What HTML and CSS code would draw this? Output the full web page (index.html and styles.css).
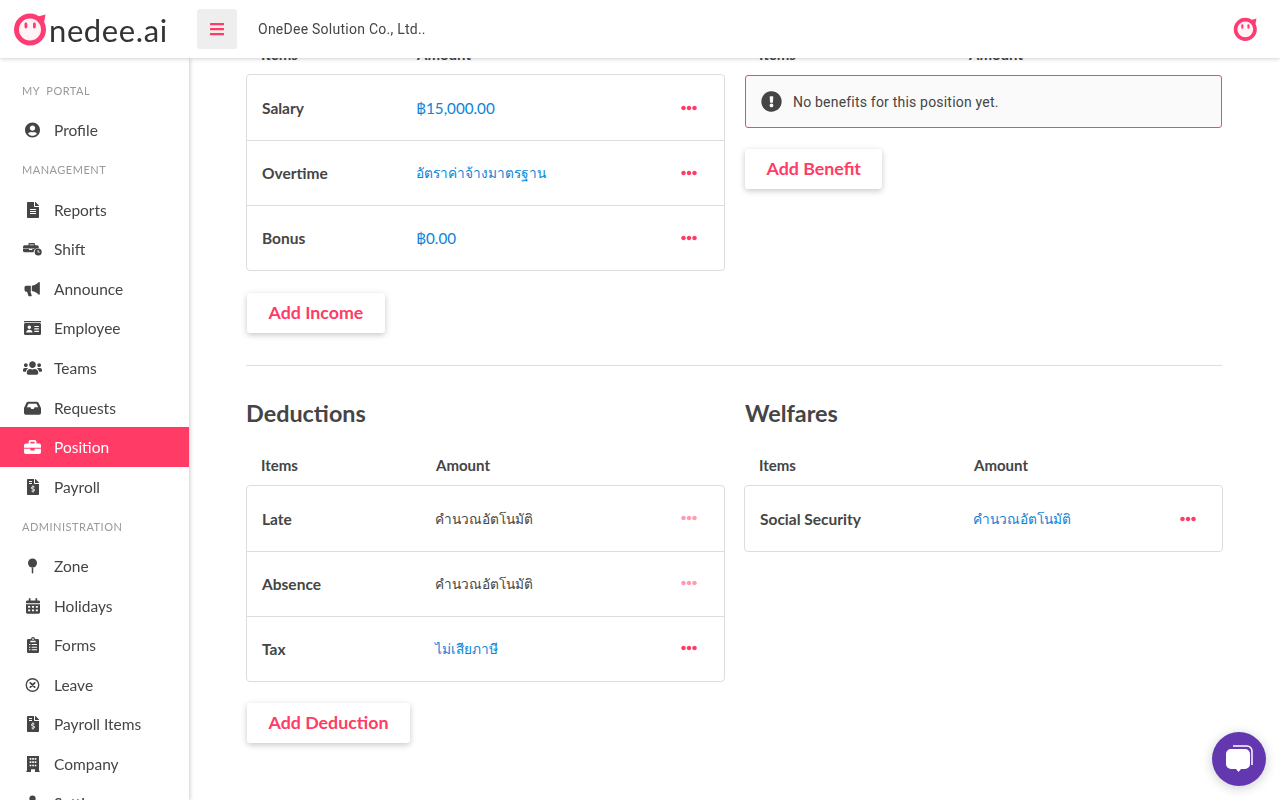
FILE: index.html
```html
<!DOCTYPE html>
<html>
<head>
  <title>Position ~ OneDee</title>
  <link rel="stylesheet" href="styles.css">
</head>
<body>
<svg class="sprite">
  <symbol id="i-user" viewBox="0 0 496 512"><path d="M248 8C111 8 0 119 0 256s111 248 248 248 248-111 248-248S385 8 248 8zm0 96c48.6 0 88 39.4 88 88s-39.4 88-88 88-88-39.4-88-88 39.4-88 88-88zm0 344c-58.7 0-111.3-26.6-146.5-68.2 18.8-35.4 55.6-59.8 98.5-59.8 2.4 0 4.8.4 7.1 1.1 13 4.2 26.6 6.9 40.9 6.9 14.3 0 28-2.7 40.9-6.9 2.3-.7 4.7-1.1 7.1-1.1 42.9 0 79.7 24.4 98.5 59.8C359.3 421.4 306.7 448 248 448z"/></symbol>
  <symbol id="i-bars" viewBox="0 0 448 512"><path d="M16 132h416c8.837 0 16-7.163 16-16V76c0-8.837-7.163-16-16-16H16C7.163 60 0 67.163 0 76v40c0 8.837 7.163 16 16 16zm0 160h416c8.837 0 16-7.163 16-16v-40c0-8.837-7.163-16-16-16H16c-8.837 0-16 7.163-16 16v40c0 8.837 7.163 16 16 16zm0 160h416c8.837 0 16-7.163 16-16v-40c0-8.837-7.163-16-16-16H16c-8.837 0-16 7.163-16 16v40c0 8.837 7.163 16 16 16z"/></symbol>
  <symbol id="i-file" viewBox="0 0 384 512"><path d="M224 136V0H24C10.7 0 0 10.7 0 24v464c0 13.3 10.7 24 24 24h336c13.3 0 24-10.7 24-24V160H248c-13.2 0-24-10.8-24-24zm64 236c0 6.6-5.4 12-12 12H108c-6.6 0-12-5.4-12-12v-8c0-6.6 5.4-12 12-12h168c6.6 0 12 5.4 12 12v8zm0-64c0 6.6-5.4 12-12 12H108c-6.6 0-12-5.4-12-12v-8c0-6.6 5.4-12 12-12h168c6.6 0 12 5.4 12 12v8zm0-72v8c0 6.6-5.4 12-12 12H108c-6.6 0-12-5.4-12-12v-8c0-6.6 5.4-12 12-12h168c6.6 0 12 5.4 12 12zm96-114.1v6.1H256V0h6.1c6.4 0 12.5 2.5 17 7l97.9 98c4.5 4.5 7 10.6 7 16.9z"/></symbol>
  <symbol id="i-bill" viewBox="0 0 384 512"><path d="M224 136V0H24C10.7 0 0 10.7 0 24v464c0 13.3 10.7 24 24 24h336c13.3 0 24-10.7 24-24V160H248c-13.2 0-24-10.8-24-24zM64 72c0-4.400 3.600-8 8-8h80c4.400 0 8 3.600 8 8v16c0 4.400-3.600 8-8 8H72c-4.400 0-8-3.600-8-8V72zm0 64c0-4.400 3.600-8 8-8h80c4.400 0 8 3.600 8 8v16c0 4.400-3.600 8-8 8H72c-4.400 0-8-3.600-8-8v-16zm144 263.900V424c0 4.400-3.600 8-8 8h-16c-4.400 0-8-3.600-8-8v-24.300c-11.300-.6-22.300-4.500-31.400-11.400-3.900-2.900-4.100-8.800-.6-12.100l11.800-11.200c2.800-2.600 6.900-2.800 10.100-.7 3.900 2.400 8.300 3.700 12.800 3.700h28.100c6.500 0 11.800-5.900 11.800-13.200 0-6-3.600-11.200-8.800-12.700l-45-13.500c-18.600-5.600-31.600-23.400-31.600-43.400 0-24.500 19-44.400 42.700-45.100V216c0-4.400 3.600-8 8-8h16c4.400 0 8 3.600 8 8v24.300c11.300.6 22.300 4.500 31.400 11.400 3.900 2.900 4.100 8.800.6 12.100l-11.800 11.200c-2.800 2.600-6.900 2.800-10.100.7-3.900-2.400-8.300-3.700-12.800-3.700h-28.100c-6.500 0-11.800 5.900-11.800 13.200 0 6 3.600 11.200 8.800 12.700l45 13.500c18.600 5.600 31.600 23.400 31.600 43.400 0 24.500-19 44.400-42.700 45.100zM384 121.900v6.100H256V0h6.100c6.400 0 12.500 2.500 17 7l97.900 98c4.500 4.500 7 10.600 7 16.900z"/></symbol>
  <symbol id="i-users" viewBox="0 0 640 512"><path d="M96 224c35.300 0 64-28.700 64-64s-28.700-64-64-64-64 28.700-64 64 28.700 64 64 64zm448 0c35.300 0 64-28.700 64-64s-28.700-64-64-64-64 28.700-64 64 28.700 64 64 64zm32 32h-64c-17.600 0-33.500 7.100-45.100 18.600 40.300 22.100 68.900 62 75.100 109.400h66c17.700 0 32-14.300 32-32v-32c0-35.300-28.700-64-64-64zm-256 0c61.900 0 112-50.100 112-112S381.900 32 320 32 208 82.100 208 144s50.100 112 112 112zm76.800 32h-8.300c-20.800 10-43.900 16-68.500 16s-47.600-6-68.500-16h-8.300C179.600 288 128 339.600 128 403.200V432c0 26.500 21.500 48 48 48h288c26.500 0 48-21.500 48-48v-28.800c0-63.600-51.600-115.200-115.200-115.200zm-223.700-13.400C161.500 263.100 145.600 256 128 256H64c-35.300 0-64 28.700-64 64v32c0 17.700 14.300 32 32 32h65.900c6.300-47.400 34.900-87.300 75.200-109.400z"/></symbol>
  <symbol id="i-alert" viewBox="0 0 512 512"><path d="M504 256c0 136.997-111.043 248-248 248S8 392.997 8 256C8 119.083 119.043 8 256 8s248 111.083 248 248zm-248 50c-25.405 0-46 20.595-46 46s20.595 46 46 46 46-20.595 46-46-20.595-46-46-46zm-43.673-165.346l7.418 136c.347 6.364 5.609 11.346 11.982 11.346h48.546c6.373 0 11.635-4.982 11.982-11.346l7.418-136c.375-6.874-5.098-12.654-11.982-12.654h-63.383c-6.884 0-12.356 5.780-11.981 12.654z"/></symbol>
  <symbol id="i-dots" viewBox="0 0 512 512"><path d="M328 256c0 39.800-32.200 72-72 72s-72-32.200-72-72 32.200-72 72-72 72 32.200 72 72zm104-72c-39.800 0-72 32.200-72 72s32.200 72 72 72 72-32.200 72-72-32.200-72-72-72zm-352 0c-39.800 0-72 32.200-72 72s32.200 72 72 72 72-32.200 72-72-32.200-72-72-72z"/></symbol>
  <symbol id="i-shift" viewBox="0 0 35 26"><path d="M12 2h8a2 2 0 0 1 2 2v2h4a3 3 0 0 1 3 3v2.600A8 8 0 0 0 19.400 19H3a3 3 0 0 1-3-3v-3h11v2h6v-2h3.500L22 12H0V9a3 3 0 0 1 3-3h7V4a2 2 0 0 1 2-2zm0 2.500V6h8V4.500z"/><path fill-rule="evenodd" d="M28 12a6.500 6.500 0 1 1 0 13 6.500 6.500 0 0 1 0-13zm-1 3v4.500h4V18h-2.500v-3z"/></symbol>
  <symbol id="i-horn" viewBox="0 0 24 24"><path d="M23 2.500v17c0 1-1.200 1.500-2 .8-2.500-2.300-5.800-4.800-10-5.200V7c4.200-.4 7.500-2.900 10-5.200.8-.7 2-.2 2 .7zM9.500 7v9H9l1.800 5.300c.2.700-.3 1.700-1.200 1.700H7c-.5 0-1-.3-1.200-.9L3.900 16H2.500A2.500 2.500 0 0 1 0 13.500v-4A2.500 2.500 0 0 1 2.500 7z"/></symbol>
  <symbol id="i-card" viewBox="0 0 24 20"><path fill-rule="evenodd" d="M0 0h24v2H0zM2 3h20a2 2 0 0 1 2 2v13a2 2 0 0 1-2 2H2a2 2 0 0 1-2-2V5a2 2 0 0 1 2-2zm5.500 3.500a2.500 2.500 0 1 0 0 5 2.500 2.500 0 0 0 0-5zM3 16.500h9c0-2.500-2-4-4.500-4s-4.500 1.500-4.500 4zM14.500 7v1.500H21V7zm0 3.500V12H21v-1.500zm0 3.500v1.500H21V14z"/></symbol>
  <symbol id="i-inbox" viewBox="0 0 24 20"><path fill-rule="evenodd" d="M6 1h12c1 0 1.800.5 2.300 1.300L24 10v7a2.500 2.500 0 0 1-2.500 2.500h-19A2.500 2.500 0 0 1 0 17v-7l3.700-7.700C4.200 1.500 5 1 6 1zm.3 3L4 9h5l1.300 2.500h3.400L15 9h5l-2.300-5z"/></symbol>
  <symbol id="i-case" viewBox="0 0 24 20"><path d="M9 0h6a2.500 2.500 0 0 1 2.500 2.500V5h4A2.500 2.500 0 0 1 24 7.500V11H0V7.500A2.500 2.500 0 0 1 2.500 5h4V2.500A2.500 2.500 0 0 1 9 0zm0 2.500V5h6V2.500zM0 12.500h9V15h6v-2.500h9v5a2.500 2.500 0 0 1-2.500 2.500h-19A2.500 2.500 0 0 1 0 17.500z"/></symbol>
  <symbol id="i-pin" viewBox="0 0 12 20"><circle cx="6" cy="6" r="6"/><path d="M5 12h2v7a1 1 0 0 1-2 0z"/></symbol>
  <symbol id="i-cal" viewBox="0 0 20 22"><path fill-rule="evenodd" d="M4 0h2.500v3h7V0H16v3h2a2 2 0 0 1 2 2v2H0V5a2 2 0 0 1 2-2h2zM0 8.500h20V20a2 2 0 0 1-2 2H2a2 2 0 0 1-2-2zm3 2.500v2.500h3V11zm5.500 0v2.500h3V11zm5.500 0v2.500h3V11zm-11 5v2.500h3V16zm5.500 0v2.500h3V16zm5.500 0v2.500h3V16z"/></symbol>
  <symbol id="i-clip" viewBox="0 0 18 24"><path fill-rule="evenodd" d="M9 0a3 3 0 0 1 3 3h4a2 2 0 0 1 2 2v17a2 2 0 0 1-2 2H2a2 2 0 0 1-2-2V5a2 2 0 0 1 2-2h4a3 3 0 0 1 3-3zM9 2a1.200 1.200 0 1 0 0 2.400A1.200 1.200 0 0 0 9 2zM5 5.500V8h8V5.500zM3 10.500V12h2v-1.500zm4 0V12h8v-1.500zm-4 4V16h2v-1.500zm4 0V16h8v-1.500zm-4 4V20h2v-1.500zm4 0V20h8v-1.500z"/></symbol>
  <symbol id="i-leave" viewBox="0 0 24 24"><path fill="none" stroke="currentColor" stroke-width="2.200" d="M12 2a10 10 0 1 1 0 20 10 10 0 0 1 0-20z"/><path fill="none" stroke="currentColor" stroke-width="2.800" stroke-linecap="round" d="M8.500 8.500l7 7m0-7l-7 7"/></symbol>
  <symbol id="i-build" viewBox="0 0 20 24"><path fill-rule="evenodd" d="M1 0h18v22h1v2h-7v-4H7v4H0v-2h1zm4 3v2.500h2.500V3zm3.800 0v2.500h2.500V3zm3.700 0v2.500H15V3zM5 8v2.500h2.500V8zm3.800 0v2.500h2.500V8zm3.700 0v2.500H15V8zM5 13v2.500h2.500V13zm3.800 0v2.500h2.500V13zm3.700 0v2.500H15V13z"/></symbol>
  <symbol id="i-gear" viewBox="0 0 24 24"><path d="M12 0a5 5 0 1 1 0 10 5 5 0 0 1 0-10zM5 12h14l3 12H2z"/></symbol>
  <symbol id="i-face" viewBox="0 0 36 36"><circle cx="17" cy="18.500" r="13.500" fill="#fff3f6" stroke="#ff3b73" stroke-width="5"/><path d="M25 5.500l7.500-2-1.500 8z" fill="#ff3b73"/><rect x="11.500" y="11.500" width="2.800" height="6" rx="1.400" fill="#ff3b73"/><rect x="20" y="11.500" width="2.800" height="6" rx="1.400" fill="#ff3b73"/></symbol>
</svg>

<header class="topbar">
  <a class="logo"><svg class="logo-face"><use href="#i-face"/></svg><span class="logo-text">nedee.ai</span></a>
  <button class="menu-btn"><svg class="ico-bars"><use href="#i-bars"/></svg></button>
  <span class="company">OneDee Solution Co., Ltd..</span>
  <svg class="user-face"><use href="#i-face"/></svg>
</header>

<nav class="sidebar">
  <div class="nav-label">MY&nbsp; PORTAL</div>
  <a class="nav-item"><span class="nav-ico"><svg class="w15"><use href="#i-user"/></svg></span>Profile</a>
  <div class="nav-label">MANAGEMENT</div>
  <a class="nav-item"><span class="nav-ico"><svg class="w12"><use href="#i-file"/></svg></span>Reports</a>
  <a class="nav-item"><span class="nav-ico"><svg class="w19"><use href="#i-shift"/></svg></span>Shift</a>
  <a class="nav-item"><span class="nav-ico"><svg class="w17"><use href="#i-horn"/></svg></span>Announce</a>
  <a class="nav-item"><span class="nav-ico"><svg class="w17"><use href="#i-card"/></svg></span>Employee</a>
  <a class="nav-item"><span class="nav-ico"><svg class="w19"><use href="#i-users"/></svg></span>Teams</a>
  <a class="nav-item"><span class="nav-ico"><svg class="w17"><use href="#i-inbox"/></svg></span>Requests</a>
  <a class="nav-item active"><span class="nav-ico"><svg class="w17"><use href="#i-case"/></svg></span>Position</a>
  <a class="nav-item"><span class="nav-ico"><svg class="w12"><use href="#i-bill"/></svg></span>Payroll</a>
  <div class="nav-label">ADMINISTRATION</div>
  <a class="nav-item"><span class="nav-ico"><svg class="w9"><use href="#i-pin"/></svg></span>Zone</a>
  <a class="nav-item"><span class="nav-ico"><svg class="w14"><use href="#i-cal"/></svg></span>Holidays</a>
  <a class="nav-item"><span class="nav-ico"><svg class="w12"><use href="#i-clip"/></svg></span>Forms</a>
  <a class="nav-item"><span class="nav-ico"><svg class="w15"><use href="#i-leave"/></svg></span>Leave</a>
  <a class="nav-item"><span class="nav-ico"><svg class="w12"><use href="#i-bill"/></svg></span>Payroll Items</a>
  <a class="nav-item"><span class="nav-ico"><svg class="w14"><use href="#i-build"/></svg></span>Company</a>
  <a class="nav-item"><span class="nav-ico"><svg class="w15"><use href="#i-gear"/></svg></span>Settings</a>
</nav>

<main class="content">
  <div class="two-col">
    <section class="col-income">
      <div class="list-head"><span>Items</span><span>Amount</span></div>
      <div class="list-card">
        <div class="list-row"><b>Salary</b><a class="val">฿15,000.00</a><svg class="dots"><use href="#i-dots"/></svg></div>
        <div class="list-row"><b>Overtime</b><a class="val th">อัตราค่าจ้างมาตรฐาน</a><svg class="dots"><use href="#i-dots"/></svg></div>
        <div class="list-row"><b>Bonus</b><a class="val">฿0.00</a><svg class="dots"><use href="#i-dots"/></svg></div>
      </div>
      <button class="add-btn">Add Income</button>
    </section>
    <section class="col-benefit">
      <div class="list-head"><span>Items</span><span>Amount</span></div>
      <div class="alert"><svg class="alert-ico"><use href="#i-alert"/></svg>No benefits for this position yet.</div>
      <button class="add-btn">Add Benefit</button>
    </section>
  </div>

  <hr class="divider">

  <div class="two-col">
    <section class="col-deduct">
      <h2>Deductions</h2>
      <div class="list-head"><span>Items</span><span>Amount</span></div>
      <div class="list-card">
        <div class="list-row"><b>Late</b><span class="th">คำนวณอัตโนมัติ</span><svg class="dots off"><use href="#i-dots"/></svg></div>
        <div class="list-row"><b>Absence</b><span class="th">คำนวณอัตโนมัติ</span><svg class="dots off"><use href="#i-dots"/></svg></div>
        <div class="list-row"><b>Tax</b><a class="val th">ไม่เสียภาษี</a><svg class="dots"><use href="#i-dots"/></svg></div>
      </div>
      <button class="add-btn">Add Deduction</button>
    </section>
    <section class="col-welfare">
      <h2>Welfares</h2>
      <div class="list-head"><span>Items</span><span>Amount</span></div>
      <div class="list-card">
        <div class="list-row"><b>Social Security</b><a class="val th">คำนวณอัตโนมัติ</a><svg class="dots"><use href="#i-dots"/></svg></div>
      </div>
    </section>
  </div>
</main>

<a class="chat-btn">
  <svg viewBox="0 0 30 30" class="chat-ico">
    <path d="M9 2h14a5 5 0 0 1 5 5v14" fill="none" stroke="#fff" stroke-width="1.500"/>
    <path d="M7 5h14a5 5 0 0 1 5 5v10a5 5 0 0 1-5 5h-4l-2.500 3-2.500-3H7a5 5 0 0 1-5-5V10a5 5 0 0 1 5-5z" fill="#fff"/>
  </svg>
</a>
</body>
</html>
```

FILE: styles.css
```css
:root {
  --pink: #ff3b66;
  --text: #454545;
  --line: #dddddd;
  --blue: #0b84d8;
}

html, body {
  margin: 0;
  height: 800px;
  overflow: hidden;
}

body {
  font-family: "Lato", "Noto Sans", sans-serif;
  color: var(--text);
  background: #fff;
}

.sprite {
  display: none;
}

svg {
  fill: currentColor;
}

/* top bar */

.topbar {
  position: fixed;
  top: 0;
  left: 0;
  right: 0;
  height: 58px;
  z-index: 3;
  background: #fff;
  box-shadow: 0 1px 4px rgba(0, 0, 0, .18);
  display: flex;
  align-items: center;
}

.logo {
  display: flex;
  align-items: center;
  width: 197px;
  padding-left: 13px;
  box-sizing: border-box;
}

.logo-face {
  width: 36px;
  height: 36px;
}

.logo-text {
  font-size: 31px;
  font-weight: 400;
  color: #333;
  letter-spacing: .6px;
  margin-top: 1px;
}

.menu-btn {
  width: 40px;
  height: 40px;
  border: 0;
  border-radius: 3px;
  background: #eeeeee;
  color: var(--pink);
  display: flex;
  align-items: center;
  justify-content: center;
  padding: 0;
}

.ico-bars {
  width: 14px;
  height: 16px;
}

.company {
  font-family: "Roboto", sans-serif;
  font-size: 14px;
  letter-spacing: .25px;
  margin-left: 21px;
}

.user-face {
  width: 26px;
  height: 26px;
  margin-left: auto;
  margin-right: 21px;
}

/* side nav */

.sidebar {
  position: fixed;
  top: 58px;
  left: 0;
  bottom: 0;
  width: 189px;
  padding-top: 13px;
  box-sizing: border-box;
  overflow: hidden;
  background: #fff;
  box-shadow: 1px 0 4px rgba(0, 0, 0, .2);
  z-index: 2;
}

.nav-label {
  height: 39.6px;
  line-height: 39.6px;
  padding-left: 22px;
  font-size: 11px;
  letter-spacing: .5px;
  color: #999;
}

.nav-item {
  height: 39.6px;
  display: flex;
  align-items: center;
  font-size: 15.5px;
  color: var(--text);
}

.nav-item.active {
  background: var(--pink);
  color: #fff;
}

.nav-ico {
  width: 54px;
  padding-left: 11px;
  box-sizing: border-box;
  display: flex;
  justify-content: center;
}

.nav-ico svg {
  height: 16px;
}

.w9 { width: 9px; }
.w12 { width: 12px; }
.w14 { width: 14px; }
.w15 { width: 15px; }
.w17 { width: 17px; }
.w19 { width: 19px; }

/* content */

.content {
  margin-left: 189px;
  padding: 34px 57px 0;
}

.two-col {
  display: grid;
  grid-template-columns: 479px 479px;
  column-gap: 19px;
}

.col-income { --col: 154px; }
.col-benefit { --col: 208px; }
.col-deduct { --col: 173px; }
.col-welfare { --col: 213px; }

.list-head {
  height: 40px;
  padding-left: 15px;
  display: grid;
  grid-template-columns: calc(var(--col) + 2px) 1fr;
  align-items: center;
  font-size: 15px;
  font-weight: 700;
}

.list-card {
  border: 1px solid var(--line);
  border-radius: 4px;
}

.list-row {
  height: 65px;
  box-sizing: border-box;
  padding: 0 27px 0 15px;
  display: grid;
  grid-template-columns: var(--col) 1fr 16px;
  align-items: center;
  font-size: 15.2px;
}

.list-row + .list-row {
  border-top: 1px solid var(--line);
}

.list-row b {
  font-size: 15.5px;
}

.th {
  font-size: 13.7px;
}

.val {
  color: var(--blue);
}

.dots {
  width: 16px;
  height: 16px;
  color: var(--pink);
}

.dots.off {
  opacity: .5;
}

.col-deduct .dots {
  transform: translateY(-1px);
}

.col-welfare .list-row {
  padding-right: 26px;
}

.add-btn {
  display: block;
  height: 40px;
  margin: 22px 0 0 1px;
  padding: 0 21.5px 2px;
  border: 0;
  border-radius: 3px;
  background: #fff;
  color: var(--pink);
  font-family: inherit;
  font-size: 17.8px;
  font-weight: 700;
  box-shadow: 0 2px 6px rgba(0, 0, 0, .22);
}

.col-deduct .add-btn,
.col-benefit .add-btn {
  margin-top: 21px;
}

.alert {
  height: 53px;
  margin: 1px;
  padding: 1px 0 0 15px;
  box-sizing: border-box;
  display: flex;
  align-items: center;
  background: #fafafa;
  border: 1px solid #ec4a70;
  border-radius: 3px;
  font-family: "Roboto", sans-serif;
  font-size: 14px;
  letter-spacing: .2px;
}

.alert-ico {
  width: 21px;
  height: 21px;
  margin-right: 11px;
  margin-top: -1px;
}

.divider {
  border: 0;
  border-top: 1px solid var(--line);
  margin: 32px 1px 0 0;
}

h2 {
  margin: 32px 0 17px;
  font-size: 23.4px;
  line-height: 30px;
  font-weight: 700;
}

.col-welfare h2 {
  margin-left: 1px;
}

/* chat bubble */

.chat-btn {
  position: fixed;
  right: 14px;
  bottom: 14px;
  width: 54px;
  height: 54px;
  border-radius: 50%;
  background: #6237b0;
  box-shadow: 0 2px 12px rgba(0, 0, 0, .2);
  display: flex;
  align-items: center;
  justify-content: center;
  z-index: 4;
}

.chat-ico {
  width: 30px;
  height: 30px;
}
```
